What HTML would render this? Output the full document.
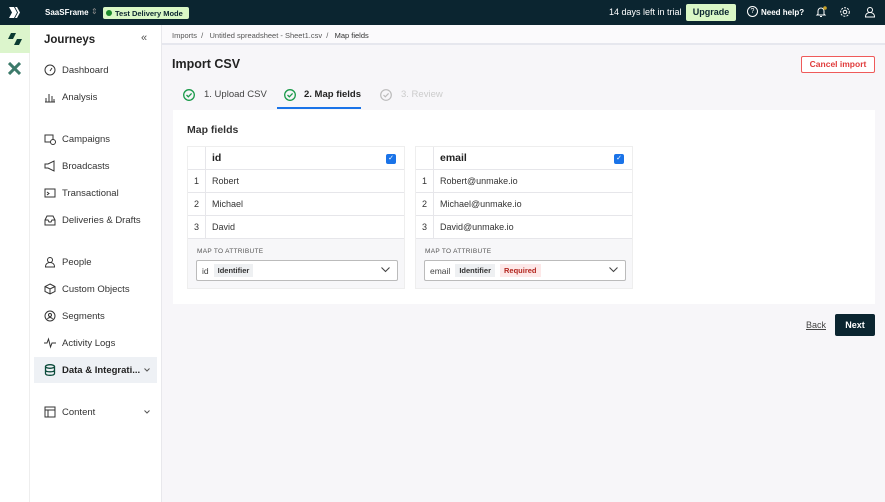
<!DOCTYPE html>
<html><head><style>
*{box-sizing:border-box;margin:0;padding:0}
body{width:885px;height:502px;overflow:hidden;font-family:"Liberation Sans",sans-serif;background:#f7f6f9;position:relative;color:#222}
.abs{position:absolute;white-space:nowrap}
.top{left:0;top:0;width:885px;height:25px;background:#0b2530;color:#fff}
.rail{left:0;top:25px;width:30px;height:477px;background:#fff;border-right:1px solid #eee}
.nav{left:30px;top:25px;width:132px;height:477px;background:#fff;border-right:1px solid #e8e8ec}
.ni{position:absolute;left:14px;font-size:9.5px;color:#333;display:flex;align-items:center;white-space:nowrap}
.ni svg{width:12px;height:12px;margin-right:6px}
.crumb{left:162px;top:25px;width:723px;height:20px;background:#fbfafc;border-bottom:2px solid #e6e7ee;font-size:7.5px;color:#555;padding:6px 10px}
.card{left:173px;top:110px;width:702px;height:194px;background:#fff}
.tbl{position:absolute;top:146px;width:218px;height:143px;background:#f7f7f9;border:1px solid #eee}
.row{position:absolute;left:0;width:216px;height:23px;background:#fff;border-bottom:1px solid #e6e6ea;font-size:9px;color:#333}
.row .n{position:absolute;left:0;width:18px;height:100%;border-right:1px solid #e6e6ea;text-align:center;line-height:23px}
.row .v{position:absolute;left:24px;line-height:23px}
.cb{position:absolute;right:8px;top:7px;width:10px;height:10px;background:#1a73e8;border-radius:2px;color:#fff;font-size:7px;text-align:center;line-height:10px}
.lbl{position:absolute;left:9px;top:101px;font-size:6.5px;letter-spacing:.3px;color:#555}
.sel{position:absolute;left:8px;top:113px;width:202px;height:21px;background:#fff;border:1px solid #bbb;border-radius:2px;font-size:8.5px;color:#444;padding-left:5px;display:flex;align-items:center;white-space:nowrap}
.tag{background:#eef0f2;font-size:7.5px;font-weight:bold;padding:2px 4px;margin-left:5px;color:#333}
.req{background:#fde8e8;color:#b3261e}
.chev{position:absolute;right:7px;top:6px}
</style></head><body>
<div class="abs top">
 <div class="abs" style="left:8px;top:6px;width:13px;height:13px"><svg viewBox="0 0 13 13"><path d="M1 1h5l3 5.5-3 5.5H1l3-5.5z" fill="#fff"/><path d="M7 1h2l3 5.5-3 5.5H7l3-5.5z" fill="#fff"/></svg></div>
 <div class="abs" style="left:45px;top:8px;font-size:8px;font-weight:bold">SaaSFrame</div>
 <div class="abs" style="left:91px;top:7px;font-size:8px;color:#888">⇕</div>
 <div class="abs" style="left:103px;top:7px;height:12px;width:86px;background:#d9f7c6;border-radius:2px;color:#0b2530;font-size:7.5px;font-weight:bold;padding:2px 3px"><span style="display:inline-block;width:6px;height:6px;background:#1a8a2a;border-radius:50%;margin-right:3px"></span>Test Delivery Mode</div>
 <div class="abs" style="left:609px;top:7px;font-size:9px">14 days left in trial</div>
 <div class="abs" style="left:686px;top:4px;width:50px;height:17px;background:#d9f7c6;border-radius:2px;color:#0b2530;font-size:9px;font-weight:bold;text-align:center;line-height:17px">Upgrade</div>
 <div class="abs" style="left:747px;top:6px;width:11px;height:11px;border:1.2px solid #fff;border-radius:50%;font-size:7px;text-align:center;line-height:9px">?</div>
 <div class="abs" style="left:761px;top:8px;font-size:8px;font-weight:bold">Need help?</div>
 <svg class="abs" style="left:815px;top:6px" width="12" height="12" viewBox="0 0 12 12"><path d="M3 8V5a3 3 0 016 0v3l1 1H2z M5 10.5h2" stroke="#fff" fill="none" stroke-width="1"/><circle cx="10" cy="2" r="1.8" fill="#c9a227"/></svg>
 <svg class="abs" style="left:839px;top:6px" width="12" height="12" viewBox="0 0 12 12"><circle cx="6" cy="6" r="1.8" stroke="#fff" fill="none"/><circle cx="6" cy="6" r="4.3" stroke="#fff" fill="none" stroke-dasharray="2 1.2"/></svg>
 <svg class="abs" style="left:864px;top:6px" width="12" height="12" viewBox="0 0 12 12"><circle cx="6" cy="4" r="2.5" stroke="#fff" fill="none"/><path d="M1.5 11c0-3 2-4.5 4.5-4.5s4.5 1.5 4.5 4.5z" stroke="#fff" fill="none"/></svg>
</div>
<div class="abs rail">
 <div class="abs" style="left:0;top:0;width:30px;height:28px;background:#dcf5cc"></div>
 <svg class="abs" style="left:8px;top:8px" width="14" height="12" viewBox="0 0 14 12"><path d="M3 0h5L5 6H0z M9 6h5l-3 6H6z" fill="#0b3b32"/></svg>
 <svg class="abs" style="left:8px;top:37px" width="13" height="13" viewBox="0 0 13 13"><path d="M1 1l11 11M12 1L1 12" stroke="#3c7a6a" stroke-width="3"/></svg>
</div>
<div class="abs nav">
 <div class="abs" style="left:14px;top:9px;font-size:11.5px;font-weight:bold;color:#222">Journeys</div>
 <div class="abs" style="left:111px;top:7px;font-size:11px;color:#555">«</div>
 <div class="ni" style="top:39px"><svg viewBox="0 0 12 12"><circle cx="6" cy="6" r="5" stroke="#333" fill="none"/><path d="M6 7l2-3" stroke="#333"/></svg>Dashboard</div>
 <div class="ni" style="top:66px"><svg viewBox="0 0 12 12"><path d="M1 11h10M2 11V7M5 11V3M8 11V5M10 11V8" stroke="#333"/></svg>Analysis</div>
 <div class="ni" style="top:108px"><svg viewBox="0 0 12 12"><rect x="1" y="2" width="8" height="7" stroke="#333" fill="none"/><circle cx="9" cy="9" r="2.5" fill="#fff" stroke="#333"/></svg>Campaigns</div>
 <div class="ni" style="top:135px"><svg viewBox="0 0 12 12"><path d="M1 4h3l6-3v10L4 8H1z" stroke="#333" fill="none"/></svg>Broadcasts</div>
 <div class="ni" style="top:162px"><svg viewBox="0 0 12 12"><rect x="1" y="2" width="10" height="8" stroke="#333" fill="none"/><path d="M3 5l2 1.5L3 8" stroke="#333" fill="none"/></svg>Transactional</div>
 <div class="ni" style="top:189px"><svg viewBox="0 0 12 12"><path d="M1 6l2-4h6l2 4v5H1z M1 6h3l1 2h2l1-2h3" stroke="#333" fill="none"/></svg>Deliveries &amp; Drafts</div>
 <div class="ni" style="top:231px"><svg viewBox="0 0 12 12"><circle cx="6" cy="4" r="2.5" stroke="#333" fill="none"/><path d="M1.5 11c0-3 2-4.5 4.5-4.5s4.5 1.5 4.5 4.5z" stroke="#333" fill="none"/></svg>People</div>
 <div class="ni" style="top:258px"><svg viewBox="0 0 12 12"><path d="M6 1l5 2.5v5L6 11 1 8.5v-5z M1 3.5L6 6l5-2.5M6 6v5" stroke="#333" fill="none"/></svg>Custom Objects</div>
 <div class="ni" style="top:285px"><svg viewBox="0 0 12 12"><circle cx="6" cy="6" r="5" stroke="#333" fill="none"/><circle cx="6" cy="5" r="1.5" stroke="#333" fill="none"/><path d="M3.5 9c1-2 4-2 5 0" stroke="#333" fill="none"/></svg>Segments</div>
 <div class="ni" style="top:312px"><svg viewBox="0 0 12 12"><path d="M0 6h3l1.5-4 2 8 1.5-4h4" stroke="#333" fill="none"/></svg>Activity Logs</div>
 <div class="abs" style="left:4px;top:332px;width:123px;height:26px;background:#eef1f5"></div>
 <div class="ni" style="top:339px;font-weight:bold;color:#222"><svg viewBox="0 0 12 12"><ellipse cx="6" cy="2.5" rx="4.5" ry="1.8" stroke="#0b4a3a" fill="none" stroke-width="1.3"/><path d="M1.5 2.5v7c0 2.4 9 2.4 9 0v-7M1.5 6c0 2.4 9 2.4 9 0" stroke="#0b4a3a" fill="none" stroke-width="1.3"/></svg>Data &amp; Integrati...</div>
 <svg class="abs" style="left:114px;top:343px" width="6" height="4"><path d="M0.5 0.5L3 3l2.5-2.5" stroke="#555" fill="none"/></svg>
 <div class="ni" style="top:381px"><svg viewBox="0 0 12 12"><rect x="1" y="1" width="10" height="10" stroke="#333" fill="none"/><path d="M1 4h10M4 4v7" stroke="#333"/></svg>Content</div>
 <svg class="abs" style="left:114px;top:385px" width="6" height="4"><path d="M0.5 0.5L3 3l2.5-2.5" stroke="#555" fill="none"/></svg>
</div>
<div class="abs crumb">Imports &nbsp;/&nbsp;&nbsp; Untitled spreadsheet - Sheet1.csv &nbsp;/&nbsp;&nbsp; <span style="color:#333">Map fields</span></div>
<div class="abs" style="left:172px;top:57px;font-size:12.5px;font-weight:bold;color:#222">Import CSV</div>
<div class="abs" style="left:801px;top:56px;width:74px;height:17px;border:1px solid #ef5a5a;border-radius:2px;background:#fff;color:#e03b3b;font-size:8.5px;font-weight:bold;text-align:center;line-height:15px">Cancel import</div>
<svg class="abs" style="left:183px;top:89px" width="12" height="12"><circle cx="6" cy="6" r="5.3" stroke="#1a9a4a" fill="none" stroke-width="1.3"/><path d="M3.5 6l1.8 1.8L8.6 4.4" stroke="#1a9a4a" fill="none" stroke-width="1.3"/></svg>
<div class="abs" style="left:204px;top:89px;font-size:9.5px;color:#444">1. Upload CSV</div>
<svg class="abs" style="left:284px;top:89px" width="12" height="12"><circle cx="6" cy="6" r="5.3" stroke="#1a9a4a" fill="none" stroke-width="1.3"/><path d="M3.5 6l1.8 1.8L8.6 4.4" stroke="#1a9a4a" fill="none" stroke-width="1.3"/></svg>
<div class="abs" style="left:304px;top:89px;font-size:9.5px;font-weight:bold;color:#222">2. Map fields</div>
<div class="abs" style="left:277px;top:107px;width:84px;height:2px;background:#1a73e8"></div>
<svg class="abs" style="left:380px;top:89px" width="12" height="12"><circle cx="6" cy="6" r="5.3" stroke="#bbb" fill="none" stroke-width="1.2"/><path d="M3.5 6l1.8 1.8L8.6 4.4" stroke="#bbb" fill="none" stroke-width="1.2"/></svg>
<div class="abs" style="left:401px;top:89px;font-size:9.5px;color:#ccc">3. Review</div>
<div class="abs card"></div>
<div class="abs" style="left:187px;top:124px;font-size:10.5px;font-weight:bold;color:#333">Map fields</div>

<div class="tbl" style="left:187px">
 <div class="row" style="top:0"><div class="n"></div><div class="v" style="font-size:10.5px;font-weight:bold;color:#222">id</div><div class="cb">✓</div></div>
 <div class="row" style="top:23px"><div class="n">1</div><div class="v">Robert</div></div>
 <div class="row" style="top:46px"><div class="n">2</div><div class="v">Michael</div></div>
 <div class="row" style="top:69px"><div class="n">3</div><div class="v">David</div></div>
 <div class="lbl">MAP TO ATTRIBUTE</div>
 <div class="sel">id<span class="tag">Identifier</span><svg class="chev" width="9" height="6"><path d="M0.5 0.5L4.5 4.5 8.5 0.5" stroke="#444" fill="none" stroke-width="1.1"/></svg></div>
</div>
<div class="tbl" style="left:415px">
 <div class="row" style="top:0"><div class="n"></div><div class="v" style="font-size:10.5px;font-weight:bold;color:#222">email</div><div class="cb">✓</div></div>
 <div class="row" style="top:23px"><div class="n">1</div><div class="v">Robert@unmake.io</div></div>
 <div class="row" style="top:46px"><div class="n">2</div><div class="v">Michael@unmake.io</div></div>
 <div class="row" style="top:69px"><div class="n">3</div><div class="v">David@unmake.io</div></div>
 <div class="lbl">MAP TO ATTRIBUTE</div>
 <div class="sel">email<span class="tag">Identifier</span><span class="tag req">Required</span><svg class="chev" width="9" height="6"><path d="M0.5 0.5L4.5 4.5 8.5 0.5" stroke="#444" fill="none" stroke-width="1.1"/></svg></div>
</div>
<div class="abs" style="left:806px;top:320px;font-size:9px;color:#444;text-decoration:underline">Back</div>
<div class="abs" style="left:835px;top:314px;width:40px;height:22px;background:#0b2530;border-radius:2px;color:#fff;font-size:9px;font-weight:bold;text-align:center;line-height:22px">Next</div>
</body></html>
